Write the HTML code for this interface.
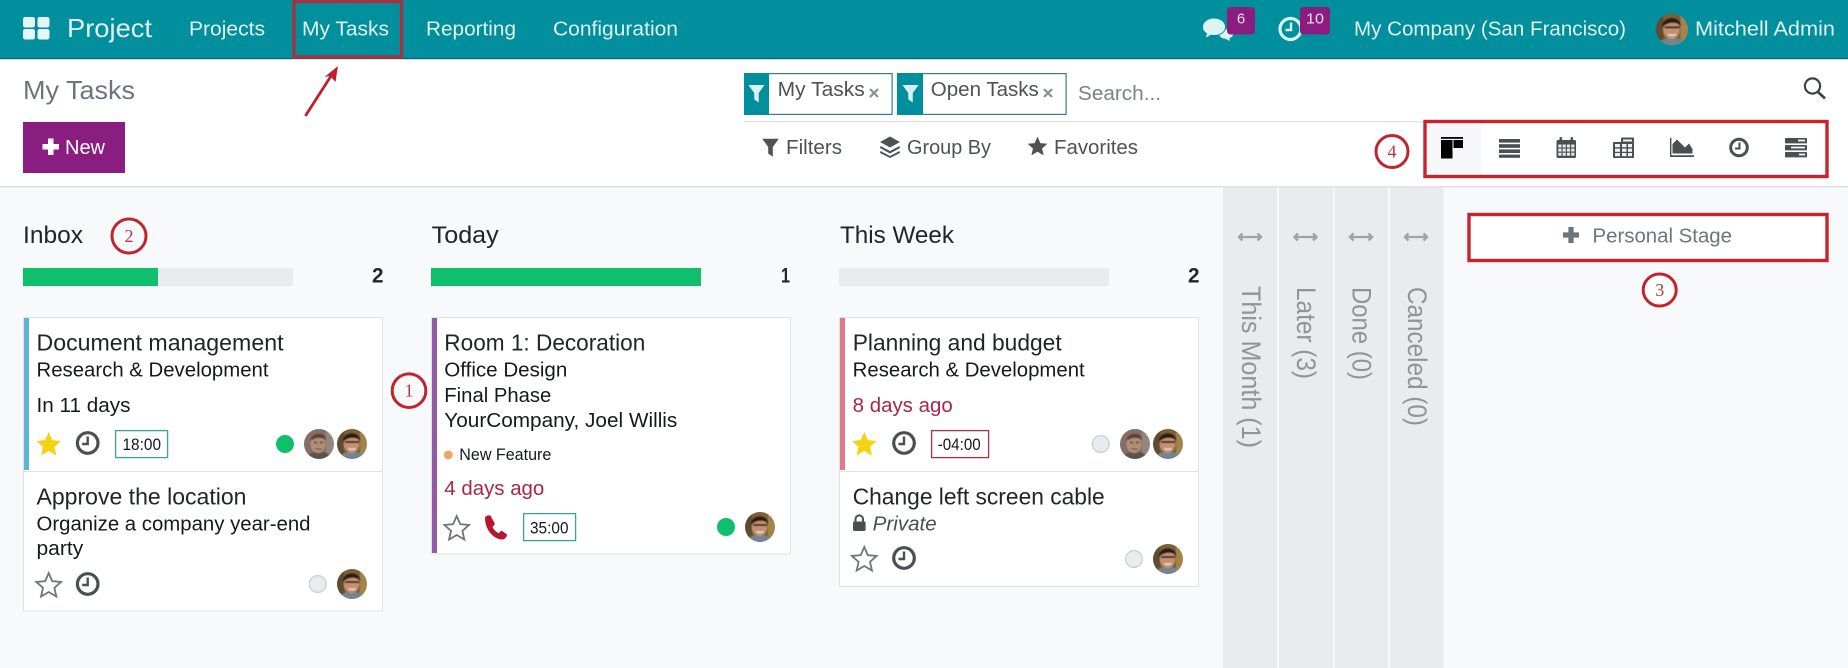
<!DOCTYPE html>
<html lang="en">
<head>
<meta charset="utf-8">
<title>My Tasks</title>
<style>
html,body{margin:0;padding:0;background:#f8f9fa;width:1848px;height:668px;overflow:hidden}
svg{display:block}
text{font-family:"Liberation Sans",sans-serif}
.nav{font-size:20px;fill:#dff3f3}
.ttl{font-size:23px;fill:#212529}
.sub{font-size:20px;fill:#16191c}
.tm{font-size:16.5px;fill:#16191c}
.red{font-size:20px;fill:#a8264a}
.hd{font-size:24px;fill:#212529}
.cnt{font-size:21.5px;font-weight:bold;fill:#212529}
.ctl{font-size:20px;fill:#4d5257}
.fold{font-size:27px;fill:#8f9499}
.num{font-family:"Liberation Serif",serif;font-size:18px;fill:#c0303a}
</style>
</head>
<body>
<svg width="1848" height="668" viewBox="0 0 1848 668" xmlns="http://www.w3.org/2000/svg">
<defs>
<path id="star" d="M0,-13 L3.53,-4.85 L12.36,-4.02 L5.71,1.85 L7.64,10.52 L0,6 L-7.64,10.52 L-5.71,1.85 L-12.36,-4.02 L-3.53,-4.85 Z"/>
<g id="clock" fill="none" stroke="#4a4f53"><circle r="10.3" stroke-width="3.2" fill="#fff"/><path d="M0,-6.5 V1 H-5.5" stroke-width="2.4"/></g>
<clipPath id="av"><circle r="15"/></clipPath>
<filter id="soft" x="-10%" y="-10%" width="120%" height="120%"><feGaussianBlur stdDeviation="0.6"/></filter>
<g id="mitch"><g clip-path="url(#av)"><g filter="url(#soft)">
<rect x="-16" y="-16" width="32" height="32" fill="#7c5f34"/>
<rect x="-16" y="-16" width="8" height="32" fill="#5f4c2e"/>
<rect x="8" y="-16" width="8" height="32" fill="#a3854c"/>
<path d="M-13,16 C-12,9 -6,8 0,8 C6,8 12,9 13,16 Z" fill="#74858f"/>
<ellipse cx="-0.5" cy="0" rx="7.8" ry="9" fill="#c4906f"/>
<path d="M-9,-2 C-10,-13 8,-14 8.5,-3 C5,-7.5 -4,-7.5 -9,-2 Z" fill="#2a1e18"/>
<path d="M-7,-2 H7" stroke="#32231e" stroke-width="1.8"/>
<path d="M-3.5,4.5 Q0,6.5 3.5,4.5" stroke="#efe0d2" stroke-width="1.4" fill="none"/>
</g></g></g>
<g id="marc"><g clip-path="url(#av)"><g filter="url(#soft)">
<rect x="-16" y="-16" width="32" height="32" fill="#806f69"/>
<rect x="7" y="-16" width="9" height="32" fill="#94857f"/>
<path d="M-13,16 C-12,9 -6,8 0,8 C6,8 12,9 13,16 Z" fill="#5d534b"/>
<ellipse cx="-1" cy="0" rx="7.5" ry="9" fill="#b28c74"/>
<path d="M-8.5,-3 C-9,-12 7,-13 7,-4 C3,-7 -4,-7 -8.5,-3 Z" fill="#5c4332"/>
<path d="M-5,-1.5 H-2 M1,-1.5 H4" stroke="#3d2d26" stroke-width="1.3"/>
<path d="M-3.5,5 H2.5" stroke="#6e4a3a" stroke-width="1.1"/>
</g></g></g>
<path id="fn" d="M-9,-9.5 H9 L2.5,-0.5 V10 L-2.5,6.5 V-0.5 Z"/>
<g id="dbl" fill="none" stroke="#9ea3a8"><path d="M-10,0 H10" stroke-width="2.2"/><path d="M-7.5,-3.5 L-11,0 L-7.5,3.5 M7.5,-3.5 L11,0 L7.5,3.5" stroke-width="2.4"/></g>
</defs>

<!-- background -->
<rect width="1848" height="668" fill="#f8f9fa"/>
<rect width="1848" height="186" fill="#fff"/>
<rect y="186" width="1848" height="1.5" fill="#dee2e6"/>

<!-- top bar -->
<rect width="1848" height="58" fill="#018e9d"/>
<rect y="58" width="1848" height="1.2" fill="#0c5f6b"/>
<g fill="#e4f6f6">
<rect x="23" y="17" width="12" height="10.5" rx="2.2"/><rect x="37.5" y="17" width="12" height="10.5" rx="2.2"/>
<rect x="23" y="29" width="12" height="10.5" rx="2.2"/><rect x="37.5" y="29" width="12" height="10.5" rx="2.2"/>
</g>
<text x="67" y="37" font-size="26" fill="#dff3f3" textLength="85" lengthAdjust="spacingAndGlyphs">Project</text>
<text class="nav" x="189" y="35.5" textLength="76" lengthAdjust="spacingAndGlyphs">Projects</text>
<text class="nav" x="302" y="35.5" textLength="87" lengthAdjust="spacingAndGlyphs">My Tasks</text>
<text class="nav" x="426" y="35.5" textLength="90" lengthAdjust="spacingAndGlyphs">Reporting</text>
<text class="nav" x="553" y="35.5" textLength="125" lengthAdjust="spacingAndGlyphs">Configuration</text>
<rect x="294" y="1.5" width="107.5" height="55.5" fill="none" stroke="#a5333f" stroke-width="3.4"/>

<!-- messages icon + badges -->
<g fill="#dcf5f3">
<path d="M1219,33 C1224,27 1232,29 1233,33 C1233.5,36 1231.5,37.5 1229.5,38 L1230,41 L1224.5,38.5 C1221,38.5 1219,36 1219,33 Z"/>
<path d="M1214,18 C1220.5,18 1225.5,22 1225.5,27 C1225.5,32 1220.5,35.5 1214,35.5 C1213,35.5 1212,35.4 1211,35.2 L1205,38.5 L1206.5,33.5 C1204,32 1202.5,29.5 1202.5,27 C1202.5,22 1207.5,18 1214,18 Z" stroke="#018e9d" stroke-width="0.9"/>
</g>
<rect x="1227" y="7" width="28" height="27.5" rx="3.5" fill="#8b1d80"/>
<text x="1241" y="23.5" font-size="15" fill="#f2dff0" text-anchor="middle">6</text>
<circle cx="1290.5" cy="29" r="10.5" fill="none" stroke="#d9f5f3" stroke-width="3.2"/>
<path d="M1291,22.5 V30 H1285.5" fill="none" stroke="#d9f5f3" stroke-width="2.4"/>
<rect x="1300" y="7" width="30" height="27.5" rx="3.5" fill="#8b1d80"/>
<text x="1306" y="23.5" font-size="15" fill="#f2dff0" textLength="18" lengthAdjust="spacingAndGlyphs">10</text>
<text class="nav" x="1354" y="35.5" textLength="272" lengthAdjust="spacingAndGlyphs">My Company (San Francisco)</text>
<use href="#mitch" transform="translate(1672 29.5) scale(1.07)"/>
<text class="nav" x="1695" y="35.5" textLength="140" lengthAdjust="spacingAndGlyphs">Mitchell Admin</text>

<!-- control panel left -->
<text x="23" y="99" font-size="26" fill="#6c757d" textLength="112" lengthAdjust="spacingAndGlyphs">My Tasks</text>
<path d="M306,115 L331,76" stroke="#be2030" stroke-width="2.8" stroke-linecap="round"/>
<path d="M338,66 L335.5,82 L330,76 L324.5,77 Z" fill="#be2030"/>
<rect x="23" y="122" width="102" height="51" fill="#891d80"/>
<path d="M42.5,144 H48 V138.5 H53.5 V144 H59 V149.5 H53.5 V155 H48 V149.5 H42.5 Z" fill="#fff"/>
<text x="65" y="154" font-size="20" fill="#fff" textLength="40" lengthAdjust="spacingAndGlyphs">New</text>

<!-- search -->
<rect x="744.6" y="73.6" width="147.5" height="40.8" fill="#fff" stroke="#2f7f8f" stroke-width="1.2"/>
<rect x="744" y="73" width="25" height="42" fill="#018e9d"/>
<use href="#fn" transform="translate(756.5 93.5) scale(0.9)" fill="#d9f1f1"/>
<text x="777.7" y="96" font-size="20" fill="#4d5257" textLength="87" lengthAdjust="spacingAndGlyphs">My Tasks</text>
<path d="M870,89 L878,97 M878,89 L870,97" stroke="#8a8f94" stroke-width="2.2"/>
<rect x="897.6" y="73.6" width="168.5" height="40.8" fill="#fff" stroke="#2f7f8f" stroke-width="1.2"/>
<rect x="897" y="73" width="26" height="42" fill="#018e9d"/>
<use href="#fn" transform="translate(910.5 93.5) scale(0.9)" fill="#d9f1f1"/>
<text x="930.8" y="96" font-size="20" fill="#4d5257" textLength="108" lengthAdjust="spacingAndGlyphs">Open Tasks</text>
<path d="M1044,89 L1052,97 M1052,89 L1044,97" stroke="#8a8f94" stroke-width="2.2"/>
<text x="1078" y="100" font-size="20" fill="#7b8288" textLength="83" lengthAdjust="spacingAndGlyphs">Search...</text>
<circle cx="1812.5" cy="86" r="7.6" fill="none" stroke="#3c4145" stroke-width="2.2"/>
<path d="M1818,92 L1825,98.5" stroke="#3c4145" stroke-width="2.6"/>
<rect x="744" y="121" width="680" height="1.3" fill="#dee2e6"/>

<!-- filters -->
<use href="#fn" transform="translate(770.5 147.5) scale(0.92)" fill="#4d5257"/>
<text class="ctl" x="786" y="154" textLength="56" lengthAdjust="spacingAndGlyphs">Filters</text>
<g fill="#4d5257">
<path d="M890,136.5 L900,142 L890,147.5 L880,142 Z"/>
<path d="M880.5,146 L890,151 L899.5,146 L900,148 L890,153.5 L880,148 Z"/>
<path d="M880.5,151 L890,156 L899.5,151 L900,153 L890,158 L880,153 Z"/>
</g>
<text class="ctl" x="907" y="154" textLength="84" lengthAdjust="spacingAndGlyphs">Group By</text>
<use href="#star" transform="translate(1037.5 147) scale(0.8)" fill="#4d5257"/>
<text class="ctl" x="1054" y="154" textLength="84" lengthAdjust="spacingAndGlyphs">Favorites</text>

<!-- circle 4 and view switcher -->
<circle cx="1392" cy="151.5" r="16" fill="#fff" stroke="#c0252e" stroke-width="3"/>
<text class="num" x="1392" y="157.5" text-anchor="middle">4</text>
<rect x="1425" y="121.5" width="402" height="55" fill="#fff" stroke="#c7252e" stroke-width="3.4"/>
<rect x="1427" y="123.5" width="54" height="51" fill="#f6f7f9"/>
<g fill="#000">
<rect x="1441" y="137" width="22" height="1.8"/><rect x="1441" y="140" width="11.5" height="18.5"/><rect x="1453.5" y="140" width="9.5" height="8"/>
</g>
<g fill="#4a4f53">
<rect x="1499" y="139" width="21" height="3.6"/><rect x="1499" y="144.2" width="21" height="3.6"/><rect x="1499" y="149.4" width="21" height="3.6"/><rect x="1499" y="154.6" width="21" height="3.2"/>
<!-- calendar -->
<rect x="1556.5" y="140" width="19.5" height="18" rx="1.5"/>
<rect x="1559.5" y="137" width="2.6" height="5" rx="1.3"/><rect x="1570.5" y="137" width="2.6" height="5" rx="1.3"/>
<!-- table -->
<rect x="1613" y="142" width="21" height="16" rx="1"/>
<rect x="1621" y="137.5" width="13" height="5" rx="1"/>
<!-- area -->
<path d="M1670,138 H1671.4 V155.3 H1694 V157 H1670 Z"/>
<path d="M1672.5,153.5 V144 L1677,139.5 L1682,144.5 L1685,147.5 L1689,143.5 L1692.5,149 V153.5 Z"/>
<!-- gantt -->
<rect x="1785" y="138" width="22" height="5.4" rx="0.8"/><rect x="1785" y="145" width="22" height="5.4" rx="0.8"/><rect x="1785" y="152" width="22" height="5.4" rx="0.8"/>
</g>
<g fill="#f4f4f4">
<rect x="1798" y="139.6" width="7" height="1.8"/><rect x="1791" y="146.6" width="14" height="1.8"/><rect x="1799" y="153.6" width="6" height="1.8"/>
</g>
<!-- calendar cells -->
<g fill="#e8e8e8">
<rect x="1558.3" y="144.5" width="3.2" height="3"/><rect x="1562.6" y="144.5" width="3.2" height="3"/><rect x="1566.9" y="144.5" width="3.2" height="3"/><rect x="1571.2" y="144.5" width="3.2" height="3"/>
<rect x="1558.3" y="148.6" width="3.2" height="3"/><rect x="1562.6" y="148.6" width="3.2" height="3"/><rect x="1566.9" y="148.6" width="3.2" height="3"/><rect x="1571.2" y="148.6" width="3.2" height="3"/>
<rect x="1558.3" y="152.7" width="3.2" height="3"/><rect x="1562.6" y="152.7" width="3.2" height="3"/><rect x="1566.9" y="152.7" width="3.2" height="3"/><rect x="1571.2" y="152.7" width="3.2" height="3"/>
</g>
<!-- table cells -->
<g fill="#f0f0f0">
<rect x="1623" y="139.5" width="9" height="2"/>
<rect x="1615" y="144" width="5" height="3.2"/><rect x="1622" y="144" width="4.5" height="3.2"/><rect x="1628" y="144" width="4" height="3.2"/>
<rect x="1615" y="148.6" width="5" height="3.2"/><rect x="1622" y="148.6" width="4.5" height="3.2"/><rect x="1628" y="148.6" width="4" height="3.2"/>
<rect x="1615" y="153" width="5" height="3.2"/><rect x="1622" y="153" width="4.5" height="3.2"/><rect x="1628" y="153" width="4" height="3.2"/>
</g>
<circle cx="1739" cy="147.5" r="8.3" fill="none" stroke="#4a4f53" stroke-width="3"/>
<path d="M1739.5,142.5 V148.5 H1735" fill="none" stroke="#4a4f53" stroke-width="2"/>

<!-- Inbox column -->
<text class="hd" x="23" y="243" textLength="60" lengthAdjust="spacingAndGlyphs">Inbox</text>
<circle cx="129" cy="236" r="17" fill="none" stroke="#c0252e" stroke-width="3"/>
<text class="num" x="129" y="242" text-anchor="middle">2</text>
<rect x="23" y="268" width="270" height="18" fill="#e9ecef"/>
<rect x="23" y="268" width="135" height="18" fill="#10bf6b"/>
<text class="cnt" x="372" y="282.7" textLength="11.5" lengthAdjust="spacingAndGlyphs">2</text>

<rect x="23.5" y="317.5" width="359" height="154" fill="#fff" stroke="#dee2e6"/>
<rect x="24" y="318" width="5" height="152" fill="#5fb3d9"/>
<text class="ttl" x="36.5" y="350.7" textLength="247" lengthAdjust="spacingAndGlyphs">Document management</text>
<text class="sub" x="36.5" y="376.7" textLength="232" lengthAdjust="spacingAndGlyphs">Research &amp; Development</text>
<text class="sub" x="36.5" y="412" textLength="94" lengthAdjust="spacingAndGlyphs">In 11 days</text>
<use href="#star" transform="translate(48.7 445)" fill="#f3d30f"/>
<use href="#clock" transform="translate(87.7 443)"/>
<rect x="115.6" y="430.6" width="52" height="27" fill="#fff" stroke="#3aa58f" stroke-width="1.3"/>
<text class="tm" x="122.5" y="450.2" textLength="38.5" lengthAdjust="spacingAndGlyphs">18:00</text>
<circle cx="285" cy="444" r="9" fill="#10bf6b"/>
<use href="#marc" transform="translate(319 444)"/>
<use href="#mitch" transform="translate(352 444)"/>

<rect x="23.5" y="471.5" width="359" height="139.5" fill="#fff" stroke="#dee2e6"/>
<text class="ttl" x="36.5" y="504.7" textLength="210" lengthAdjust="spacingAndGlyphs">Approve the location</text>
<text class="sub" x="36.5" y="530.7" textLength="274" lengthAdjust="spacingAndGlyphs">Organize a company year-end</text>
<text class="sub" x="36.5" y="555" textLength="46.7" lengthAdjust="spacingAndGlyphs">party</text>
<use href="#star" transform="translate(48.7 586)" fill="#fff" stroke="#6f757b" stroke-width="1.8"/>
<use href="#clock" transform="translate(87.7 584)"/>
<circle cx="317.7" cy="584" r="8.4" fill="#e9ecef" stroke="#c9ccd0" stroke-width="1.2"/>
<use href="#mitch" transform="translate(352 584)"/>

<!-- circle 1 -->
<circle cx="409" cy="390.7" r="16.8" fill="none" stroke="#c0252e" stroke-width="3"/>
<text class="num" x="409" y="396.7" text-anchor="middle">1</text>

<!-- Today column -->
<text class="hd" x="431.7" y="243" textLength="67" lengthAdjust="spacingAndGlyphs">Today</text>
<rect x="431" y="268" width="270" height="18" fill="#10bf6b"/>
<text class="cnt" x="781" y="282.7" textLength="9" lengthAdjust="spacingAndGlyphs">1</text>
<rect x="431.5" y="317.5" width="359" height="236.5" fill="#fff" stroke="#dee2e6"/>
<rect x="432" y="318" width="5" height="235" fill="#9358a6"/>
<text class="ttl" x="444.3" y="350.7" textLength="201" lengthAdjust="spacingAndGlyphs">Room 1: Decoration</text>
<text class="sub" x="444.3" y="376.7" textLength="123" lengthAdjust="spacingAndGlyphs">Office Design</text>
<text class="sub" x="444.3" y="402" textLength="107" lengthAdjust="spacingAndGlyphs">Final Phase</text>
<text class="sub" x="444.3" y="427" textLength="233" lengthAdjust="spacingAndGlyphs">YourCompany, Joel Willis</text>
<circle cx="448.3" cy="455" r="4.5" fill="#eaa863"/>
<text x="459.3" y="460" font-size="17" fill="#16191c" textLength="92" lengthAdjust="spacingAndGlyphs">New Feature</text>
<text class="red" x="444.3" y="495" textLength="100" lengthAdjust="spacingAndGlyphs">4 days ago</text>
<use href="#star" transform="translate(456.7 529)" fill="#fff" stroke="#6f757b" stroke-width="1.8"/>
<path d="M485,518 C485,516 488,515 490.5,515.5 L495,524 L492.5,527 C493.5,529.5 496.5,532.5 499,533 L501.5,530.5 L507,534.5 C507,537 505,539 503,539.5 C494,540 485,530 485,518 Z" fill="#b5172f"/>
<rect x="523.6" y="513.6" width="52" height="27" fill="#fff" stroke="#3aa58f" stroke-width="1.3"/>
<text class="tm" x="530" y="533.5" textLength="38.5" lengthAdjust="spacingAndGlyphs">35:00</text>
<circle cx="726" cy="527" r="9" fill="#10bf6b"/>
<use href="#mitch" transform="translate(760 527)"/>

<!-- This Week column -->
<text class="hd" x="840" y="243" textLength="114" lengthAdjust="spacingAndGlyphs">This Week</text>
<rect x="839" y="268" width="270" height="18" fill="#e9ecef"/>
<text class="cnt" x="1188" y="282.7" textLength="11.5" lengthAdjust="spacingAndGlyphs">2</text>
<rect x="839.5" y="317.5" width="359" height="154" fill="#fff" stroke="#dee2e6"/>
<rect x="840" y="318" width="5" height="152" fill="#e07b85"/>
<text class="ttl" x="852.7" y="350.7" textLength="209" lengthAdjust="spacingAndGlyphs">Planning and budget</text>
<text class="sub" x="852.7" y="376.7" textLength="232" lengthAdjust="spacingAndGlyphs">Research &amp; Development</text>
<text class="red" x="852.7" y="412" textLength="100" lengthAdjust="spacingAndGlyphs">8 days ago</text>
<use href="#star" transform="translate(864.3 445)" fill="#f3d30f"/>
<use href="#clock" transform="translate(904 443)"/>
<rect x="931.6" y="430.6" width="57" height="27" fill="#fff" stroke="#a8324a" stroke-width="1.3"/>
<text class="tm" x="937.7" y="450.2" textLength="43" lengthAdjust="spacingAndGlyphs">-04:00</text>
<circle cx="1100.7" cy="444" r="8.4" fill="#e9ecef" stroke="#c9ccd0" stroke-width="1.2"/>
<use href="#marc" transform="translate(1135 444)"/>
<use href="#mitch" transform="translate(1168 444)"/>

<rect x="839.5" y="471.5" width="359" height="115" fill="#fff" stroke="#dee2e6"/>
<text class="ttl" x="852.7" y="504.7" textLength="252" lengthAdjust="spacingAndGlyphs">Change left screen cable</text>
<path d="M855.5,522 V519.5 C855.5,514 863,514 863,519.5 V522" fill="none" stroke="#4a4f53" stroke-width="2"/>
<rect x="853" y="521.5" width="12.6" height="9.5" rx="1.2" fill="#4a4f53"/>
<text x="872.7" y="530.7" font-size="20" font-style="italic" fill="#4a4f53" textLength="64" lengthAdjust="spacingAndGlyphs">Private</text>
<use href="#star" transform="translate(864.3 560)" fill="#fff" stroke="#6f757b" stroke-width="1.8"/>
<use href="#clock" transform="translate(904 558)"/>
<circle cx="1134" cy="559" r="8.4" fill="#e9ecef" stroke="#c9ccd0" stroke-width="1.2"/>
<use href="#mitch" transform="translate(1168 559)"/>

<!-- folded columns -->
<g fill="#e9ecef">
<rect x="1223" y="187.5" width="54" height="481"/>
<rect x="1279" y="187.5" width="54" height="481"/>
<rect x="1334.5" y="187.5" width="53.5" height="481"/>
<rect x="1390" y="187.5" width="53.5" height="481"/>
</g>
<use href="#dbl" transform="translate(1250 237)"/>
<use href="#dbl" transform="translate(1305.5 237)"/>
<use href="#dbl" transform="translate(1361 237)"/>
<use href="#dbl" transform="translate(1416 237)"/>
<text class="fold" transform="translate(1242 286) rotate(90)" textLength="162" lengthAdjust="spacingAndGlyphs">This Month (1)</text>
<text class="fold" transform="translate(1296.8 287) rotate(90)" textLength="92" lengthAdjust="spacingAndGlyphs">Later (3)</text>
<text class="fold" transform="translate(1352.5 287) rotate(90)" textLength="93" lengthAdjust="spacingAndGlyphs">Done (0)</text>
<text class="fold" transform="translate(1408 287) rotate(90)" textLength="139" lengthAdjust="spacingAndGlyphs">Canceled (0)</text>

<!-- personal stage -->
<rect x="1469" y="214.5" width="358" height="46" fill="#fff" stroke="#c7252e" stroke-width="3.4"/>
<path d="M1563,232.4 H1568.4 V227 H1573.6 V232.4 H1579 V237.6 H1573.6 V243 H1568.4 V237.6 H1563 Z" fill="#6c757d"/>
<text x="1592.5" y="242.7" font-size="20.5" fill="#6f757b" textLength="139.5" lengthAdjust="spacingAndGlyphs">Personal Stage</text>
<ellipse cx="1659.7" cy="290" rx="16.5" ry="16" fill="#fff" stroke="#c0252e" stroke-width="3"/>
<text class="num" x="1659.7" y="296" text-anchor="middle">3</text>
</svg>
</body>
</html>
